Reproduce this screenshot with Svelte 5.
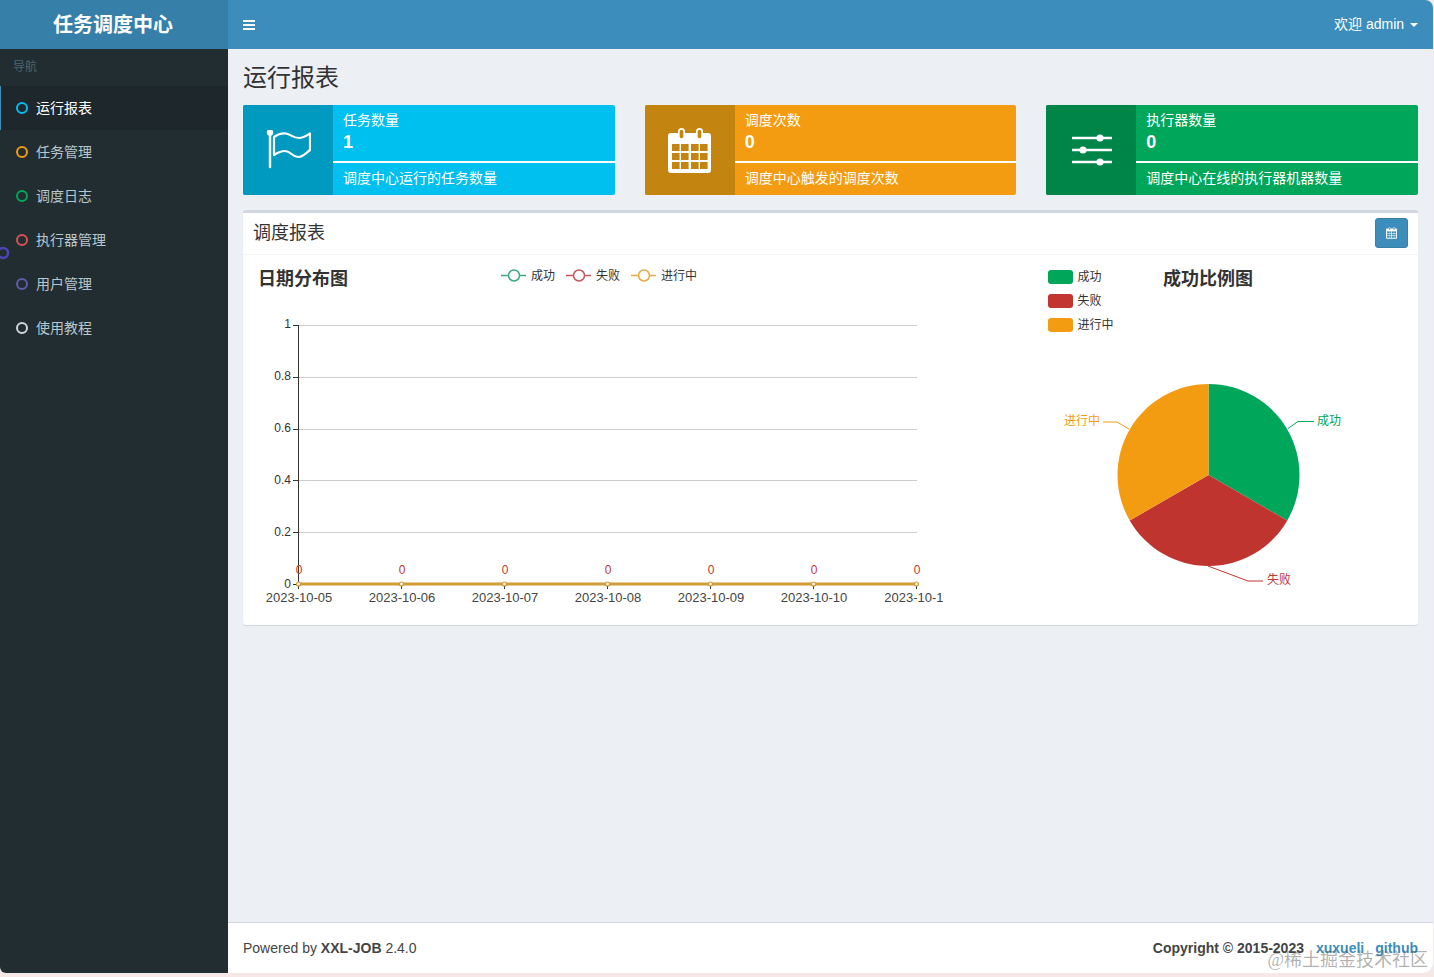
<script>
  const menu = [
    { label: '运行报表', color: '#00c0ef', active: true },
    { label: '任务管理', color: '#f39c12' },
    { label: '调度日志', color: '#00a65a' },
    { label: '执行器管理', color: '#d9534f' },
    { label: '用户管理', color: '#605ca8' },
    { label: '使用教程', color: '#d2d6de' }
  ];

  const cards = [
    { kind: 'flag', cls: 'aqua', title: '任务数量', num: 1, desc: '调度中心运行的任务数量' },
    { kind: 'cal', cls: 'yellow', title: '调度次数', num: 0, desc: '调度中心触发的调度次数' },
    { kind: 'sliders', cls: 'green', title: '执行器数量', num: 0, desc: '调度中心在线的执行器机器数量' }
  ];

  const gridLines = [
    { y: 325.5, ty: 328, label: '1' },
    { y: 377.5, ty: 380, label: '0.8' },
    { y: 429.5, ty: 432, label: '0.6' },
    { y: 480.5, ty: 484, label: '0.4' },
    { y: 532.5, ty: 536, label: '0.2' },
    { y: 584.5, ty: 588, label: '0' }
  ];

  const days = ['2023-10-05', '2023-10-06', '2023-10-07', '2023-10-08', '2023-10-09', '2023-10-10', '2023-10-11'];
  const dayX = (i) => 299 + i * 103;

  const lineLegend = [
    { x: 501, color: '#3aa97f', label: '成功' },
    { x: 566, color: '#c9555a', label: '失败' },
    { x: 631, color: '#e8a93f', label: '进行中' }
  ];

  const pieLegend = [
    { y: 270, color: '#00a65a', label: '成功' },
    { y: 294, color: '#c23531', label: '失败' },
    { y: 318, color: '#f39c12', label: '进行中' }
  ];
</script>

{#snippet calendar(hole)}
  <rect x="0" y="5" width="43" height="40" rx="3" fill="#fff" />
  <rect x="10" y="0" width="7" height="12" rx="3.5" fill="#fff" />
  <rect x="28" y="0" width="7" height="12" rx="3.5" fill="#fff" />
  <rect x="11.7" y="1.7" width="3.6" height="8.6" rx="1.8" fill={hole} />
  <rect x="29.7" y="1.7" width="3.6" height="8.6" rx="1.8" fill={hole} />
  {#each [16, 25, 34] as y}
    {#each [4, 13, 23, 32] as x}
      <rect {x} {y} width="7.6" height="7" fill={hole} />
    {/each}
  {/each}
{/snippet}

<div class="wrapper">
  <aside class="sidebar">
    <div class="logo">任务调度中心</div>
    <div class="nav-head">导航</div>
    <ul class="menu">
      {#each menu as item}
        <li class:active={item.active}>
          <i class="dot" style="border-color: {item.color}"></i>
          <span>{item.label}</span>
        </li>
      {/each}
    </ul>
  </aside>

  <div class="main">
    <header class="navbar">
      <div class="burger"><i></i><i></i><i></i></div>
      <div class="user">欢迎 admin <i class="caret"></i></div>
    </header>

    <section class="content">
      <h1>运行报表</h1>

      <div class="cards">
        {#each cards as card}
          <div class="card {card.cls}">
            <div class="card-icon">
              {#if card.kind === 'flag'}
                <svg width="46" height="40" viewBox="0 0 46 40">
                  <circle cx="5" cy="2.500" r="3.200" fill="#fff" />
                  <path d="M5 3V37" stroke="#fff" stroke-width="2.400" stroke-linecap="round" fill="none" />
                  <path d="M9 7C13 4 17 3 21 3.500C26 4.500 28 8 34 8C38 8 41 6 45 3.500V20C41 23 38 27 33 27C27 27 26 21 20 21C16 21 12 23 9 25Z" stroke="#fff" stroke-width="2.200" fill="none" stroke-linejoin="round" />
                </svg>
              {:else if card.kind === 'cal'}
                <svg width="43" height="45" viewBox="0 0 43 45">
                  {@render calendar('#c48410')}
                </svg>
              {:else}
                <svg width="42" height="32" viewBox="-2 0 42 32">
                  <path d="M0 4H40M0 16H40M0 28H40" stroke="#fff" stroke-width="2.400" />
                  <circle cx="28" cy="4" r="3.600" fill="#fff" />
                  <circle cx="11" cy="16" r="3.600" fill="#fff" />
                  <circle cx="28" cy="28" r="3.600" fill="#fff" />
                </svg>
              {/if}
            </div>
            <div class="card-body">
              <div class="card-title">{card.title}</div>
              <div class="card-num">{card.num}</div>
              <div class="card-line"></div>
              <div class="card-desc">{card.desc}</div>
            </div>
          </div>
        {/each}
      </div>

      <div class="box">
        <div class="box-head">
          <h3>调度报表</h3>
          <button class="date-btn" aria-label="日期">
            <svg width="11" height="12" viewBox="0 0 43 45">
              {@render calendar('#3c8dbc')}
            </svg>
          </button>
        </div>
        <div class="box-body">
          <svg class="chart" width="700" height="370" viewBox="243 255 700 370">
            <text class="chart-title" x="258" y="284.500">日期分布图</text>

            {#each lineLegend as l}
              <path d="M{l.x} 275.500H{l.x + 25}" stroke={l.color} stroke-width="1.500" />
              <circle cx={l.x + 13} cy="275.500" r="5.500" fill="#fff" stroke={l.color} stroke-width="1.500" />
              <text class="small" x={l.x + 30} y="280">{l.label}</text>
            {/each}

            {#each gridLines as g}
              {#if g.y < 584}
                <path d="M298 {g.y}H917" stroke="#ccc" />
              {/if}
              <path d="M293 {g.y}H298" stroke="#333" />
              <text class="small" x="291" y={g.ty} text-anchor="end">{g.label}</text>
            {/each}
            <path d="M298.500 325V584" stroke="#333" />

            <path d="M298 584H917" stroke="#d49a35" stroke-width="3" />
            {#each days as day, i}
              <path d="M{dayX(i) - 0.5} 584V589" stroke="#333" />
              <circle cx={dayX(i) - 0.5} cy="584" r="2" fill="#fff" stroke="#d49a35" stroke-width="1.200" />
              <text class="zero" x={dayX(i)} y="574" text-anchor="middle">0</text>
              <text class="date" x={dayX(i)} y="602" text-anchor="middle">{day}</text>
            {/each}
          </svg>

          <svg class="chart" width="385" height="370" viewBox="1033 255 385 370">
            {#each pieLegend as l}
              <rect x="1048" y={l.y} width="25" height="14" rx="3" fill={l.color} />
              <text class="small" x="1077.500" y={l.y + 10.5}>{l.label}</text>
            {/each}
            <text class="chart-title" x="1163" y="284.500">成功比例图</text>

            <path d="M1208.500 475V384A91 91 0 0 1 1287.300 520.500Z" fill="#00a65a" />
            <path d="M1208.500 475L1287.300 520.500A91 91 0 0 1 1129.700 520.500Z" fill="#c0342f" />
            <path d="M1208.500 475L1129.700 520.500A91 91 0 0 1 1208.500 384Z" fill="#f39c12" />

            <path d="M1288 428.500L1298 421.500H1314" stroke="#00a65a" fill="none" />
            <path d="M1208 566L1248 581H1263" stroke="#c23531" fill="none" />
            <path d="M1129 429L1117 422H1103" stroke="#f39c12" fill="none" />
            <text class="small" x="1317" y="425" fill="#00a65a">成功</text>
            <text class="small" x="1267" y="584" fill="#c23531">失败</text>
            <text class="small" x="1100" y="425" text-anchor="end" fill="#f39c12">进行中</text>
          </svg>
        </div>
      </div>
    </section>

    <footer class="footer">
      <div>Powered by <b>XXL-JOB</b> 2.4.0</div>
      <div class="copy">
        <b>Copyright © 2015-2023</b>
        <a href="#/">xuxueli</a>
        <a href="#/">github</a>
      </div>
    </footer>
  </div>

  <svg class="ring" width="10" height="16" viewBox="0 0 10 16">
    <circle cx="3" cy="8" r="5" fill="none" stroke="#4b45b5" stroke-width="2.500" />
  </svg>
  <div class="watermark">@稀土掘金技术社区</div>
</div>

<style>
  :global(body) {
    background: #f5e8e6;
    font-family: "Liberation Sans", "Noto Sans CJK SC", sans-serif;
    font-size: 14px;
    color: #333;
  }

  .wrapper {
    position: relative;
    display: grid;
    grid-template-columns: 228px 1fr;
    width: 1433px;
    height: 973px;
    border-radius: 0 8px 10px 6px;
    overflow: hidden;
  }

  .sidebar {
    background: #222d32;
    color: #b8c7ce;
  }

  .logo {
    height: 49px;
    line-height: 51px;
    padding-right: 2px;
    box-sizing: border-box;
    text-align: center;
    background: #367fa9;
    color: #fff;
    font-size: 20px;
    font-weight: 700;
  }

  .nav-head {
    height: 37px;
    padding: 10px 0 0 13px;
    box-sizing: border-box;
    font-size: 12px;
    line-height: 16px;
    color: #4b646f;
  }

  .menu {
    list-style: none;
    margin: 0;
    padding: 0;
  }

  .menu li {
    display: flex;
    align-items: center;
    gap: 8px;
    height: 44px;
    padding-left: 16px;
    box-sizing: border-box;
  }

  .menu li span {
    margin-bottom: 2px;
  }

  .menu li.active {
    background: #1e282c;
    color: #fff;
    border-left: 1px solid #3c8dbc;
    padding-left: 15px;
  }

  .dot {
    width: 12px;
    height: 12px;
    border: 2.5px solid;
    border-radius: 50%;
    box-sizing: border-box;
  }

  .main {
    display: flex;
    flex-direction: column;
    min-width: 0;
  }

  .navbar {
    display: flex;
    align-items: center;
    justify-content: space-between;
    height: 49px;
    padding: 0 15px;
    background: #3c8dbc;
    color: #fff;
  }

  .burger {
    display: flex;
    flex-direction: column;
    gap: 2px;
    width: 12px;
  }

  .burger i {
    height: 2px;
    background: #fff;
  }

  .user {
    margin-bottom: 4px;
  }

  .caret {
    display: inline-block;
    margin-left: 2px;
    vertical-align: middle;
    border-top: 4px solid #fff;
    border-left: 4px solid transparent;
    border-right: 4px solid transparent;
  }

  .content {
    flex: 1;
    padding: 0 15px;
    background: #ecf0f5;
  }

  h1 {
    margin: 0;
    height: 56px;
    padding-top: 13px;
    box-sizing: border-box;
    font-size: 24px;
    line-height: 32px;
    font-weight: 400;
  }

  .cards {
    display: grid;
    grid-template-columns: repeat(3, 1fr);
    gap: 30px;
  }

  .card {
    display: flex;
    height: 90px;
    border-radius: 2px;
    overflow: hidden;
    color: #fff;
  }

  .aqua { background: #00c0ef; }
  .yellow { background: #f39c12; }
  .green { background: #00a65a; }

  .card-icon {
    display: flex;
    align-items: center;
    justify-content: center;
    flex: 0 0 90px;
  }

  .aqua .card-icon { background: #009ac0; }
  .yellow .card-icon { background: #c48410; }
  .green .card-icon { background: #008548; }

  .card-body {
    flex: 1;
    padding-top: 5px;
  }

  .card-title,
  .card-num,
  .card-desc {
    padding: 0 10px;
  }

  .card-title {
    height: 20px;
    line-height: 20px;
  }

  .card-num {
    height: 26px;
    line-height: 24px;
    font-size: 18px;
    font-weight: 700;
  }

  .card-line {
    height: 2px;
    margin: 5px 0;
    background: #fff;
  }

  .card-desc {
    line-height: 20px;
  }

  .box {
    margin-top: 15px;
    height: 415px;
    box-sizing: border-box;
    border-top: 3px solid #d2d6de;
    border-radius: 3px;
    background: #fff;
    box-shadow: 0 1px 1px rgba(0, 0, 0, 0.1);
  }

  .box-head {
    display: flex;
    align-items: center;
    justify-content: space-between;
    height: 42px;
    padding: 0 10px 2px;
    box-sizing: border-box;
    border-bottom: 1px solid #f4f4f4;
  }

  h3 {
    margin: 0 0 4px;
    font-size: 18px;
    font-weight: 400;
  }

  .date-btn {
    display: flex;
    align-items: center;
    justify-content: center;
    width: 33px;
    height: 30px;
    padding: 0;
    border: 1px solid #367fa9;
    border-radius: 3px;
    background: #3c8dbc;
  }

  .box-body {
    display: grid;
    grid-template-columns: 790px 385px;
  }

  .chart {
    display: block;
  }

  .chart text {
    font-family: "Liberation Sans", "Noto Sans CJK SC", sans-serif;
  }

  .chart-title {
    font-size: 18px;
    font-weight: 700;
    fill: #333;
  }

  .small {
    font-size: 12px;
  }

  .small:not([fill]) {
    fill: #333;
  }

  .date {
    font-size: 13px;
    fill: #444;
  }

  .zero {
    font-size: 12px;
    fill: #c23531;
  }

  .footer {
    display: flex;
    align-items: center;
    justify-content: space-between;
    height: 51px;
    padding: 0 15px;
    box-sizing: border-box;
    border-top: 1px solid #d2d6de;
    background: #fff;
    color: #444;
  }

  .copy {
    display: flex;
    gap: 11px;
    font-weight: 700;
  }

  .copy b {
    margin-right: 1px;
  }

  .copy a {
    color: #3c8dbc;
    text-decoration: none;
  }

  .ring {
    position: absolute;
    left: 0;
    top: 245px;
  }

  .watermark {
    position: absolute;
    right: 5px;
    top: 948px;
    font-family: "Liberation Serif", "Noto Sans CJK SC", serif;
    font-size: 18px;
    line-height: 24px;
    color: rgba(80, 80, 80, 0.45);
  }
</style>
